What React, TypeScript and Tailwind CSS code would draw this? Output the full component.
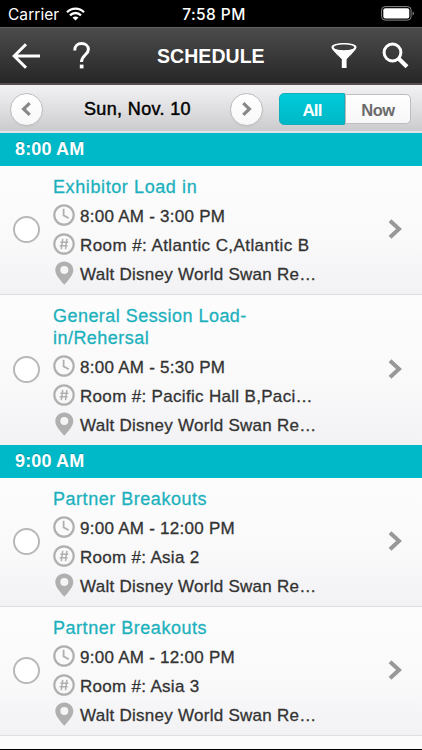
import { useState } from 'react';

interface Session {
    id: number;
    title: string;
    titleClass: string;
    time: string;
    timeClass: string;
    room: string;
    roomClass: string;
}

const groups: { label: string; sessions: Session[] }[] = [
    {
        label: '8:00 AM',
        sessions: [
            { id: 1, title: 'Exhibitor Load in', titleClass: 'tracking-[0.6px]', time: '8:00 AM - 3:00 PM', timeClass: 'tracking-[0.26px]', room: 'Room #: Atlantic C,Atlantic B', roomClass: 'tracking-[0.42px]' },
            { id: 2, title: 'General Session Load-in/Rehersal', titleClass: 'tracking-[0.46px]', time: '8:00 AM - 5:30 PM', timeClass: 'tracking-[0.26px]', room: 'Room #: Pacific Hall B,Paci…', roomClass: 'tracking-[0.32px]' },
        ],
    },
    {
        label: '9:00 AM',
        sessions: [
            { id: 3, title: 'Partner Breakouts', titleClass: 'tracking-[0.53px]', time: '9:00 AM - 12:00 PM', timeClass: 'tracking-[0.26px]', room: 'Room #: Asia 2', roomClass: 'tracking-[0.3px]' },
            { id: 4, title: 'Partner Breakouts', titleClass: 'tracking-[0.53px]', time: '9:00 AM - 12:00 PM', timeClass: 'tracking-[0.26px]', room: 'Room #: Asia 3', roomClass: 'tracking-[0.3px]' },
        ],
    },
];

function ClockIcon() {
    return (
        <svg className="mb-[2px]" width="22" height="22" viewBox="0 0 22 22" fill="none" stroke="#b0b0b0" strokeWidth="2.2">
            <circle cx="11" cy="11" r="9.7" />
            <path d="M10.6 4.7V11.4L15.8 14.2" strokeWidth="1.8" />
        </svg>
    );
}

function HashIcon() {
    return (
        <svg className="mb-[2px]" width="22" height="22" viewBox="0 0 22 22" fill="none" stroke="#b0b0b0" strokeWidth="2.2">
            <circle cx="11" cy="11" r="9.7" />
            <path d="M9.7 5.8L8.3 16.2M13.9 5.8L12.5 16.2M7.4 9.2H15.3M6.7 12.8H14.6" strokeWidth="1.5" />
        </svg>
    );
}

function PinIcon() {
    return (
        <svg className="mb-[3px]" width="22" height="24" viewBox="0 0 22 24">
            <path
                d="M11.3 0.4C6.3 0.4 2.3 4.1 2.3 8.9C2.3 13.5 6.2 18 11.3 23.7C16.4 18 20.3 13.5 20.3 8.9C20.3 4.1 16.3 0.4 11.3 0.4ZM11.3 5A4 4 0 1 1 11.3 13A4 4 0 1 1 11.3 5Z"
                fill="#b0b0b0"
                fillRule="evenodd"
            />
        </svg>
    );
}

function SessionRow({ session, last }: { session: Session; last: boolean }) {
    const line = 'flex h-[29px] items-center whitespace-nowrap text-[17px] text-[#333] [-webkit-text-stroke:0.3px_#333]';
    return (
        <div
            className={`flex items-center bg-linear-to-b from-[#fcfcfc] from-15% via-[#f9f9fa] via-60% to-[#f2f2f5] ${
                last ? 'pb-[5px]' : 'border-b border-[#dedee0] pb-[5px]'
            }`}
        >
            <div className="mt-1 mr-[13px] ml-[13px] size-[27px] shrink-0 rounded-full border-2 border-[#b8b8b8] bg-white" />
            <div className="w-[270px] pt-2.5">
                <h3 className={`mb-1 w-[220px] text-[18px] leading-[22px] text-[#1cb1bd] [-webkit-text-stroke:0.3px_#1cb1bd] ${session.titleClass}`}>
                    {session.title}
                </h3>
                <div className={line}>
                    <ClockIcon />
                    <span className={`ml-[5px] pt-0.5 ${session.timeClass}`}>{session.time}</span>
                </div>
                <div className={line}>
                    <HashIcon />
                    <span className={`ml-[5px] pt-0.5 ${session.roomClass}`}>{session.room}</span>
                </div>
                <div className={line}>
                    <PinIcon />
                    <span className="ml-[5px] pt-0.5 tracking-[0.27px]">Walt Disney World Swan Re…</span>
                </div>
            </div>
            <svg className="mt-[3px] mr-[19px] ml-auto" width="15" height="20" viewBox="0 0 15 20" fill="none" stroke="#989898" strokeWidth="4">
                <path d="M2 1.8L11 10L2 18.2" />
            </svg>
        </div>
    );
}

export default function App() {
    const [filter, setFilter] = useState<'all' | 'now'>('all');

    return (
        <div className="flex h-[750px] w-[422px] flex-col overflow-hidden border-b border-black bg-[#fbfbfc] font-['Liberation_Sans',Arial,sans-serif]">
            <div className="grid h-[27px] shrink-0 grid-cols-3 items-center bg-black text-white">
                <div className="flex items-center pt-[3px] pl-2 font-['Inter',sans-serif] text-[15.5px] tracking-[0.05px]">
                    Carrier
                    <svg className="mb-0.5 ml-[7px]" width="19" height="14" viewBox="0 0 19 14" fill="none" stroke="white" strokeWidth="2.3">
                        <path d="M1 5.2C5.8 0.3 13.2 0.3 18 5.2M4 8.3C7.2 5.2 11.8 5.2 15 8.3" />
                        <path d="M6.5 10.6C8.2 9 10.8 9 12.5 10.6L9.5 13.5Z" fill="white" stroke="none" />
                    </svg>
                </div>
                <div className="pt-[3px] pl-1.5 text-center font-['Inter',sans-serif] text-[15.5px] font-medium tracking-[0.4px]">7:58 PM</div>
                <svg className="mr-[7px] justify-self-end" width="34" height="15" viewBox="0 0 34 15">
                    <rect x="0.6" y="0.6" width="29.5" height="13.5" rx="3.5" fill="none" stroke="#8a8a8a" />
                    <rect x="2.3" y="2.3" width="26" height="10.2" rx="2" fill="white" />
                    <path d="M31.6 5.2C33.4 5.9 33.4 8.9 31.6 9.6Z" fill="#8a8a8a" />
                </svg>
            </div>

            <header className="flex h-[58px] shrink-0 items-center border-t border-b-2 border-t-[#626262] border-b-[#554f50] bg-linear-to-b from-[#4c4c4c] to-[#272727] text-white">
                <svg className="ml-3" width="29" height="26" viewBox="0 0 29 26" fill="none" stroke="white" strokeWidth="3">
                    <path d="M14 1.3L2.2 13L14 24.7M2 13H28" />
                </svg>
                <svg className="ml-8" width="18" height="27" viewBox="0 0 18 27" fill="none" stroke="white" strokeWidth="3">
                    <path d="M1.7 8.5C1.7 4 4.7 1.6 8.6 1.6C12.7 1.6 15.4 4.2 15.4 7.5C15.4 12.5 8.5 13.3 8.5 20" />
                    <path d="M6.8 22.6H10.5V26.4H6.8Z" fill="white" stroke="none" />
                </svg>
                <h1 className="ml-[66px] w-[110px] whitespace-nowrap pt-0.5 text-[19.5px] font-bold tracking-[0.05px]">SCHEDULE</h1>
                <svg className="ml-[64px]" width="26" height="27" viewBox="0 0 26 27">
                    <path
                        d="M13 1C20 1 25.5 2.6 25.5 5C25.5 7.2 23 9.5 15.6 17.3V26H10.8V17.3C3 9.5 0.5 7.2 0.5 5C0.5 2.6 6 1 13 1ZM13 2.4C7 2.4 2.7 3.7 2.7 5.3C2.7 7 7 8.2 13 8.2C19 8.2 23.3 7 23.3 5.3C23.3 3.7 19 2.4 13 2.4Z"
                        fill="white"
                        fillRule="evenodd"
                    />
                </svg>
                <svg className="ml-[25px]" width="27" height="27" viewBox="0 0 27 27" fill="none" stroke="white">
                    <circle cx="10.5" cy="10.5" r="8.4" strokeWidth="3" />
                    <path d="M16.5 16.5L25 24.7" strokeWidth="4.2" />
                </svg>
            </header>

            <div className="flex h-[47.5px] shrink-0 items-center border-b-2 border-[#e2e4e8] bg-linear-to-b from-[#f2f2f4] via-[#dedee0] via-55% to-[#cbcbcd]">
                <button className="mt-[3px] ml-2.5 grid size-[33px] place-items-center rounded-full border border-[#bdbdbf] bg-linear-to-b from-white to-[#f8f8f8] shadow-xs">
                    <svg width="11" height="14" viewBox="0 0 11 14" fill="none" stroke="#888" strokeWidth="3.2">
                        <path d="M8.7 1.2L2.6 7L8.7 12.8" />
                    </svg>
                </button>
                <span className="ml-[41px] w-[108px] whitespace-nowrap pt-[3px] text-[18px] text-black tracking-[0.35px] [-webkit-text-stroke:0.5px_black] [text-shadow:0_1px_0_white]">Sun, Nov. 10</span>
                <button className="mt-[3px] ml-[38px] grid size-[33px] place-items-center rounded-full border border-[#bdbdbf] bg-linear-to-b from-white to-[#f8f8f8] shadow-xs">
                    <svg width="11" height="14" viewBox="0 0 11 14" fill="none" stroke="#888" strokeWidth="3.2">
                        <path d="M2.3 1.2L8.4 7L2.3 12.8" />
                    </svg>
                </button>
                <div className="mt-[3px] ml-4 flex h-8 w-[132px] text-[17px] font-bold">
                    <button
                        onClick={() => setFilter('all')}
                        className={`w-[66px] rounded-l-[5px] border border-[#14aebb] pt-0.5 tracking-[-0.9px] ${filter === 'all' ? 'bg-linear-to-b from-[#00cbd9] to-[#00b8c7] text-white' : 'bg-white text-[#6b6b6b]'}`}
                    >
                        All
                    </button>
                    <button
                        onClick={() => setFilter('now')}
                        className={`my-px flex-1 rounded-r-[5px] border border-[#bdbdbf] pt-0.5 text-[16.5px] tracking-[-0.5px] ${filter === 'now' ? 'bg-linear-to-b from-[#00cbd9] to-[#00b8c7] text-white' : 'bg-linear-to-b from-white to-[#f7f7f7] text-[#6b6b6b]'}`}
                    >
                        Now
                    </button>
                </div>
            </div>

            {groups.map((group) => (
                <section key={group.label} className="shrink-0">
                    <h2 className="flex h-[33px] items-center bg-[#00b9c8] pl-[15px] pt-px text-[18px] font-bold text-white tracking-[0.15px] [text-shadow:0_-1px_0_rgba(0,0,0,0.2)]">
                        {group.label}
                    </h2>
                    {group.sessions.map((session, i) => (
                        <SessionRow key={session.id} session={session} last={group.label === '8:00 AM' && i === group.sessions.length - 1} />
                    ))}
                </section>
            ))}
        </div>
    );
}
